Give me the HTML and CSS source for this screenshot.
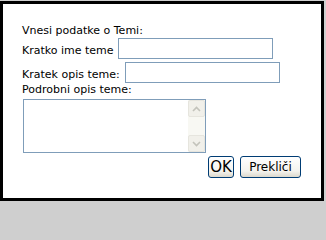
FILE: index.html
```html
<!DOCTYPE html>
<html>
<head>
<meta charset="utf-8">
<link rel="stylesheet" href="styles.css">
</head>
<body>
<div class="dialog">
  <div class="title">Vnesi podatke o Temi:</div>
  <div class="row">
    <label class="lbl">Kratko ime teme</label>
    <input class="field" type="text">
  </div>
  <div class="row row-gap">
    <label class="lbl">Kratek opis teme:</label>
    <input class="field field-wide" type="text">
  </div>
  <div class="title label4">Podrobni opis teme:</div>
  <div class="area">
    <textarea class="area-text"></textarea>
    <div class="sbar">
      <div class="sbtn">
        <svg width="9" height="6" viewBox="0 0 9 6"><path d="M1 5 L4.5 1.5 L8 5" fill="none" stroke="#c3c3bb" stroke-width="1.6"/></svg>
      </div>
      <div class="strack"></div>
      <div class="sbtn">
        <svg width="9" height="6" viewBox="0 0 9 6"><path d="M1 1 L4.5 4.5 L8 1" fill="none" stroke="#c3c3bb" stroke-width="1.6"/></svg>
      </div>
    </div>
  </div>
  <div class="buttons">
    <button class="btn btn-ok">OK</button>
    <button class="btn btn-cancel">Prekliči</button>
  </div>
</div>
</body>
</html>
```
FILE: styles.css
```css
html, body {
  margin: 0;
  padding: 0;
}
body {
  background: #cfcfcf;
  width: 326px;
  height: 202px;
  overflow: hidden;
  font-family: "DejaVu Sans", sans-serif;
  font-size: 11px;
  color: #000;
}
.dialog {
  box-sizing: border-box;
  margin-top: 1px;
  width: 324px;
  height: 200px;
  border: 3px solid #000;
  background: #fff;
  padding: 20px 20px 0 19px;
}
.title {
  line-height: 14px;
  white-space: nowrap;
}
.row {
  display: flex;
  align-items: center;
  height: 21px;
}
.row-gap {
  margin-top: 3px;
}
.lbl {
  line-height: 14px;
  padding-top: 5px;
  white-space: nowrap;
}
.field {
  box-sizing: border-box;
  width: 155px;
  height: 21px;
  margin: 0 0 0 4px;
  border: 1px solid #7f9db9;
  padding: 0 2px;
  font-family: "DejaVu Sans", sans-serif;
  font-size: 11px;
  background: #fff;
  outline: none;
}
.field-wide {
  margin-left: 5px;
}
.label4 {
  margin-top: 0;
}
.area {
  box-sizing: border-box;
  display: flex;
  width: 183px;
  height: 54px;
  margin: 2px 0 0 1px;
  border: 1px solid #7f9db9;
  background: #fff;
}
.area-text {
  flex: 1;
  border: 0;
  margin: 0;
  padding: 0;
  resize: none;
  outline: none;
  background: #fff;
}
.sbar {
  width: 17px;
  display: flex;
  flex-direction: column;
  background: #f8f8f3;
}
.sbtn {
  box-sizing: border-box;
  height: 17px;
  display: flex;
  align-items: center;
  justify-content: center;
  background: #f1f0ea;
  border: 1px solid #e6e5de;
  border-radius: 2px;
}
.strack {
  flex: 1;
}
.buttons {
  display: flex;
  justify-content: flex-end;
  gap: 6px;
  margin-top: 3px;
}
.btn {
  box-sizing: border-box;
  height: 22px;
  border: 1px solid #003c74;
  border-radius: 3px;
  background: linear-gradient(#ffffff, #f4f3ee 70%, #dcd8cc);
  color: #000;
  font-family: "DejaVu Sans", sans-serif;
  padding: 0;
  margin: 0;
  line-height: 20px;
}
.btn-ok {
  width: 26px;
  font-size: 15px;
}
.btn-cancel {
  width: 61px;
  font-size: 12px;
}
```
